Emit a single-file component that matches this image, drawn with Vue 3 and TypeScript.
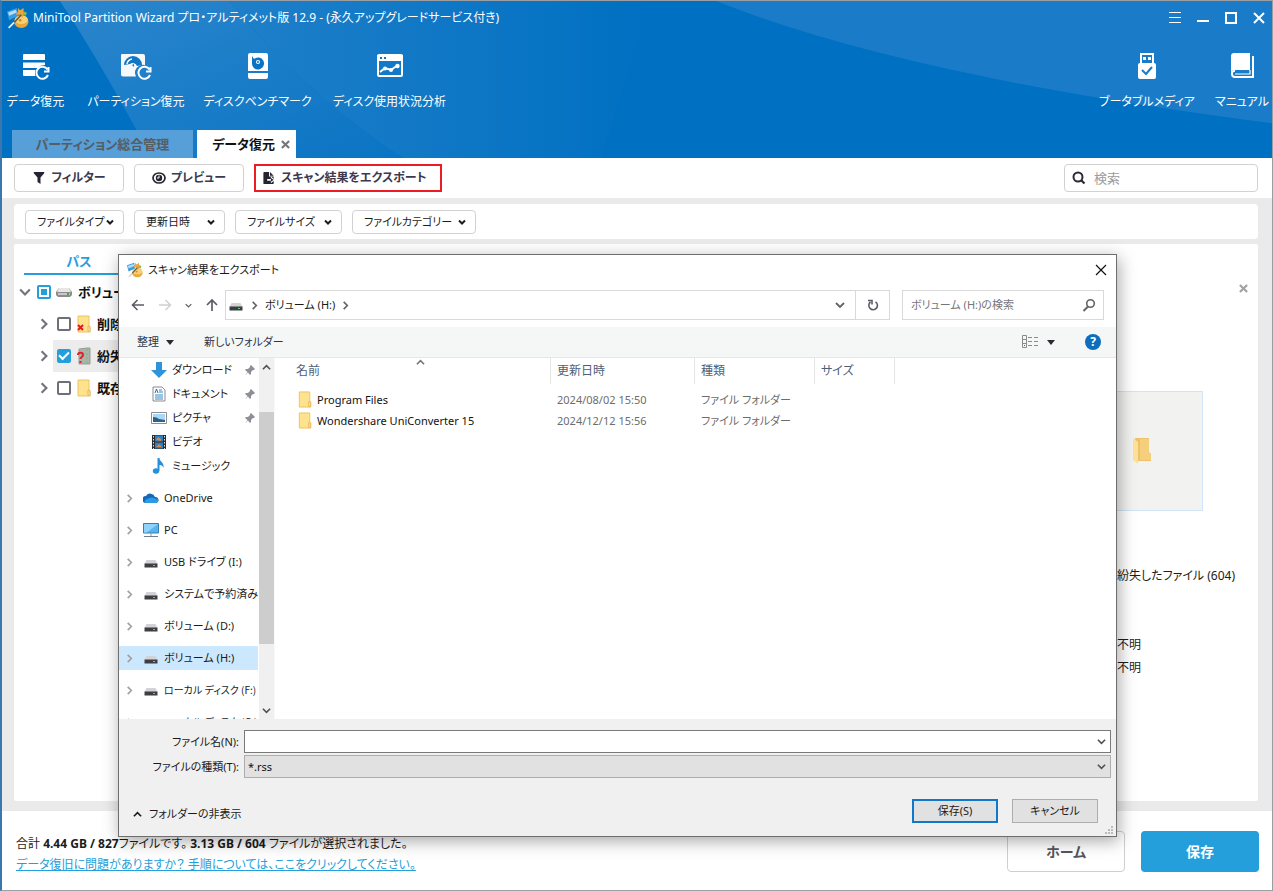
<script setup lang="ts">
import { ref } from 'vue'

interface Tool { label: string; icon: string }
interface Drive { label: string; icon: string; selected?: boolean; long?: boolean }
interface QuickItem { label: string; icon: string; pinned: boolean }
interface FileRow { name: string; modified: string; kind: string }
interface TreeRow { label: string; icon: string; checked: boolean; active: boolean }

const tools: Tool[] = [
  { label: 'データ復元', icon: 'i-data' },
  { label: 'パーティション復元', icon: 'i-part' },
  { label: 'ディスクベンチマーク', icon: 'i-bench' },
  { label: 'ディスク使用状況分析', icon: 'i-usage' },
]
const rightTools: Tool[] = [
  { label: 'ブータブルメディア', icon: 'i-usb' },
  { label: 'マニュアル', icon: 'i-book' },
]
const filters = ['ファイルタイプ', '更新日時', 'ファイルサイズ', 'ファイルカテゴリー']
const tree = ref<TreeRow[]>([
  { label: '削除', icon: 'i-folder-x', checked: false, active: false },
  { label: '紛失', icon: 'i-folder-q', checked: true, active: true },
  { label: '既存', icon: 'i-folder', checked: false, active: false },
])
const quick: QuickItem[] = [
  { label: 'ダウンロード', icon: 'i-down', pinned: true },
  { label: 'ドキュメント', icon: 'i-doc', pinned: true },
  { label: 'ピクチャ', icon: 'i-pic', pinned: true },
  { label: 'ビデオ', icon: 'i-video', pinned: false },
  { label: 'ミュージック', icon: 'i-music', pinned: false },
]
const drives: Drive[] = [
  { label: 'OneDrive', icon: 'i-cloud' },
  { label: 'PC', icon: 'i-pc' },
  { label: 'USB ドライブ (I:)', icon: 'i-drive' },
  { label: 'システムで予約済み', icon: 'i-drive' },
  { label: 'ボリューム (D:)', icon: 'i-drive' },
  { label: 'ボリューム (H:)', icon: 'i-drive', selected: true },
  { label: 'ローカル ディスク (F:)', icon: 'i-drive', long: true },
  { label: 'ローカル ディスク (G:)', icon: 'i-drive', long: true },
]
const files: FileRow[] = [
  { name: 'Program Files', modified: '2024/08/02 15:50', kind: 'ファイル フォルダー' },
  { name: 'Wondershare UniConverter 15', modified: '2024/12/12 15:56', kind: 'ファイル フォルダー' },
]
const query = ref('')
const folderQuery = ref('')
const fileName = ref('')
const fileType = ref('*.rss')
</script>

<template>
  <div class="window">
    <svg class="sprite" aria-hidden="true">
      <symbol id="i-logo" viewBox="0 0 20 20">
        <ellipse cx="13" cy="13.500" rx="6.500" ry="5.500" fill="#e9a838" />
        <ellipse cx="13" cy="11.500" rx="6" ry="4" fill="#f8cf74" />
        <path d="M0 4 9 1l1 7-8 4z" fill="#3c9ae0" />
        <path d="M1 5 8 2.500 9 5 2 8z" fill="#b5ddf7" />
        <path d="m10 1 2 2 3-2 0 3 3 2-3 1-1 3-2-3-4 0 2-3z" fill="#f3a33c" />
        <path d="m15 4 3 1-1 3-3-1z" fill="#8fba45" />
        <path d="M3 18 13 7" stroke="#6b5a3c" stroke-width="1.500" />
        <path d="m1.500 19 5-5" stroke="#e6edf2" stroke-width="1.600" />
        <circle cx="12" cy="12" r="1.200" fill="#c98a2c" />
      </symbol>
      <symbol id="i-data" viewBox="0 0 28 28">
        <path d="M2 2h20a1 1 0 0 1 1 1v5H1V3a1 1 0 0 1 1-1zM1 10.500h22V13a8 8 0 0 0-7 3H1zM1 18h12.500a8 8 0 0 0 0 6H2a1 1 0 0 1-1-1z" fill="#fff" />
        <path d="M25.500 17.500A6 6 0 1 0 26 23M26.500 15v4.500H22" fill="none" stroke="#fff" stroke-width="2" />
      </symbol>
      <symbol id="i-part" viewBox="0 0 32 28">
        <path d="M2 2h21a2 2 0 0 1 2 2v9a8 8 0 0 0-9 11.500H3a2 2 0 0 1-2-2V3a1 1 0 0 1 1-1z" fill="#f6f8fa" />
        <path d="M4 13a9 9 0 0 1 18 0l-5 1a4.500 4.500 0 0 0-7-2zM12 13l2-1v3z" fill="#1176c5" />
        <path d="M7 12a6 6 0 0 1 5-5" fill="none" stroke="#f6f8fa" stroke-width="1.500" />
        <path d="M29.500 17.500A6 6 0 1 0 30 23M30.500 15v4.500H26" fill="none" stroke="#fff" stroke-width="2" />
      </symbol>
      <symbol id="i-bench" viewBox="0 0 22 28">
        <path d="M3 1h16a2 2 0 0 1 2 2v16H1V3a2 2 0 0 1 2-2zM1 21h20v4a2 2 0 0 1-2 2H3a2 2 0 0 1-2-2z" fill="#fff" />
        <path d="M5 4v7a6 6 0 1 0 2-4z" fill="#0b73c4" />
        <circle cx="11" cy="10" r="2" fill="#fff" /><circle cx="11" cy="10" r="1" fill="#0b73c4" />
      </symbol>
      <symbol id="i-usage" viewBox="0 0 28 28">
        <rect x="2" y="3" width="24" height="21" rx="1" fill="none" stroke="#fff" stroke-width="2" />
        <path d="M1 3h26v6H1z" fill="#fff" />
        <path d="M4 5h2v2H4zM8 5h2v2H8z" fill="#0b73c4" />
        <path d="m4 20 5-4 6 2 7-5" fill="none" stroke="#fff" stroke-width="2" />
        <circle cx="9" cy="16.500" r="2" fill="#fff" /><circle cx="15" cy="18" r="2" fill="#fff" /><circle cx="21.500" cy="14" r="2.200" fill="#fff" />
      </symbol>
      <symbol id="i-usb" viewBox="0 0 20 28">
        <path d="M3 1h14v10H3z" fill="#fff" /><path d="M5 3h10v8H5z" fill="#1a7cc8" /><path d="M6 5h3v3H6zM11 5h3v3h-3z" fill="#fff" />
        <rect x="1" y="11" width="18" height="16" rx="2" fill="#fff" />
        <path d="m5 18 4 4 6-7" fill="none" stroke="#1a7cc8" stroke-width="2" />
      </symbol>
      <symbol id="i-book" viewBox="0 0 26 28">
        <path d="M5 1h16v17H6a4 4 0 0 0-4 3V4a3 3 0 0 1 3-3z" fill="#fff" />
        <path d="M24 4v21H6a3 3 0 0 1-3-3 2.500 2.500 0 0 1 3-3" fill="none" stroke="#fff" stroke-width="2" />
        <path d="M21 18v4H6" fill="none" stroke="#fff" stroke-width="1.200" />
      </symbol>
      <symbol id="i-chev" viewBox="0 0 10 10"><path d="m3 1 4 4-4 4" fill="none" stroke="currentColor" stroke-width="1.800" /></symbol>
      <symbol id="i-chevd" viewBox="0 0 10 10"><path d="m1 3 4 4 4-4" fill="none" stroke="currentColor" stroke-width="1.800" /></symbol>
      <symbol id="i-caret" viewBox="0 0 8 8"><path d="m1 2.500 3 3 3-3" fill="none" stroke="currentColor" stroke-width="2" /></symbol>
      <symbol id="i-chevu" viewBox="0 0 10 10"><path d="m1 7 4-4 4 4" fill="none" stroke="currentColor" stroke-width="1.800" /></symbol>
      <symbol id="i-x" viewBox="0 0 10 10"><path d="m1 1 8 8M9 1 1 9" fill="none" stroke="currentColor" stroke-width="2.400" /></symbol>
      <symbol id="i-filter" viewBox="0 0 12 14"><path d="M1 1h10a1 1 0 0 1 0 1.500L7.500 6.500V13l-3-2V6.500L1 2.500a1 1 0 0 1 0-1.500z" fill="#242433" /></symbol>
      <symbol id="i-eye" viewBox="0 0 14 14">
        <ellipse cx="7" cy="7" rx="6" ry="5" fill="none" stroke="#242433" stroke-width="1.700" />
        <circle cx="7" cy="7" r="3.200" fill="#242433" /><path d="M7 4.500v2.500H5" fill="none" stroke="#fff" stroke-width="1" />
      </symbol>
      <symbol id="i-export" viewBox="0 0 14 15">
        <path d="M2 1h5v5h5v7a1 1 0 0 1-1 1H2a1 1 0 0 1-1-1V2a1 1 0 0 1 1-1z" fill="#242433" /><path d="M8 1v4h4z" fill="#242433" />
        <path d="M5 8.500h4V6l4.500 3.500L9 13v-2.500H5z" fill="#fff" /><path d="M9 7.500l3 2-3 2z" fill="#242433" />
      </symbol>
      <symbol id="i-search" viewBox="0 0 14 14"><circle cx="6" cy="6" r="4.500" fill="none" stroke="currentColor" stroke-width="2" /><path d="m9 9 3.500 3.500" stroke="currentColor" stroke-width="2.200" /></symbol>
      <symbol id="i-find" viewBox="0 0 14 14"><circle cx="8.500" cy="5.500" r="3.800" fill="none" stroke="currentColor" stroke-width="1.600" /><path d="M6 8.500 1.500 13" stroke="currentColor" stroke-width="2" /></symbol>
      <symbol id="i-folder" viewBox="0 0 16 18"><path d="M2 1h11v10l1 1v5H2z" fill="#ffe28d" stroke="#eec260" /><path d="M12 11v5.500h2v-5z" fill="#ffe9ae" stroke="#e8b857" /></symbol>
      <symbol id="i-folder-x" viewBox="0 0 16 18"><path d="M2 1h11v10l1 1v5H2z" fill="#ffe28d" stroke="#eec260" /><path d="M12 11v5.500h2v-5z" fill="#ffe9ae" stroke="#e8b857" /><path d="m2 10 5 5M7 10l-5 5" stroke="#e01c1c" stroke-width="2" /></symbol>
      <symbol id="i-folder-q" viewBox="0 0 16 18"><path d="M3 2 11 1h3v16H3z" fill="#aeb2ad" stroke="#999" /><path d="M11 2v14" stroke="#7ac878" stroke-width="1.500" stroke-dasharray="2 2" /><path d="M2 8c0-3 5-3 5 0 0 2-2.500 2-2.500 4M4.500 14v2" fill="none" stroke="#d9262c" stroke-width="2" /></symbol>
      <symbol id="i-disk" viewBox="0 0 16 12"><path d="M3 2h10l3 4v3l-2 2H2L0 9V6z" fill="#8c8c8c" /><path d="M3 2h10l2 4H1z" fill="#e6e6e6" /><path d="M2 7h12v2H2z" fill="#c8c8c8" /><path d="M11 7h2v2h-2z" fill="#28b53a" /></symbol>
      <symbol id="i-drive" viewBox="0 0 16 16"><path d="m3.500 6-2 4h13l-2-4z" fill="#d3d3d5" /><path d="M1.500 9.500h13V13.500h-13z" fill="#3d3d43" /><path d="M10 11h2v1h-2z" fill="#4ddd63" /></symbol>
      <symbol id="i-down" viewBox="0 0 16 16"><path d="M5 0h6v8h5l-8 8-8-8h5z" fill="#2e93da" /></symbol>
      <symbol id="i-doc" viewBox="0 0 16 16"><path d="M2 1h9l3 3v11H2z" fill="#fff" stroke="#8b8b8b" /><path d="M8 4h3M8 6h4M4 9h8M4 11h8M4 13h8" stroke="#3688c4" /><path d="m4 7 1.500-4L7 7" fill="none" stroke="#1d70b5" /></symbol>
      <symbol id="i-pic" viewBox="0 0 16 16"><path d="M.5 2.500h15v11H.5z" fill="#fff" stroke="#8e8e8e" /><path d="M2 4h12v8H2z" fill="#a9d7f5" /><path d="M2 7q4 0 6 2l6 1v2H2z" fill="#2c6289" /></symbol>
      <symbol id="i-video" viewBox="0 0 16 16"><path d="M1 1h14v14H1z" fill="#2c2c30" /><path d="M4 1.500h8v6H4zM4 8.500h8v6H4z" fill="#2d80c4" /><path d="m5 6 2-3 3 2v2zM5 13l3-3 3 3z" fill="#d98944" /><path d="M2.500 2v13M13.500 2v13" stroke="#e2e2e2" stroke-dasharray="1.500 1.500" /></symbol>
      <symbol id="i-music" viewBox="0 0 16 16"><ellipse cx="5" cy="13" rx="3.200" ry="2.700" fill="#2590dc" /><path d="M6.500 0h2c0 4 5 4 4 10-1-3-3-3-4-3v6h-2z" fill="#2590dc" /></symbol>
      <symbol id="i-cloud" viewBox="0 0 16 16"><path d="M3 13a3.500 3.500 0 0 1 0-7 5 5 0 0 1 9 1 3 3 0 0 1 1 6z" fill="#1568b8" /><path d="M2 13q-1-3 2-4 5-3 9 0 3 0 2 3l-2 1z" fill="#2a9be6" /></symbol>
      <symbol id="i-pc" viewBox="0 0 16 16"><path d="M.5 1.500h15v9.500H.5z" fill="#55b5f0" stroke="#397eab" /><path d="M1 2h14L4 10.500H1z" fill="#8fd2fa" /><path d="M8 11v3" stroke="#999" /><path d="M1 14.500h14" stroke="#6e7f8d" /></symbol>
      <symbol id="i-pin" viewBox="0 0 12 12"><path d="m7 1 4 4-1 1-1 0-2 2 0 2-1 1-2-2.500L1 11l2.500-3L1 6l1-1h2l2-2V2z" fill="#8e8e98" /></symbol>
      <symbol id="i-open" viewBox="0 0 20 28"><path d="M3 1h14v14l2 2v7H6z" fill="#eec26a" /><path d="M8 2h9v13l2 2v6H8z" fill="#f6cf7c" /><path d="m1 1 5 4v22l-5-4z" fill="#ffe19a" /></symbol>
    </svg>

    <header class="banner">
      <svg class="art" viewBox="0 0 1273 158" preserveAspectRatio="none" aria-hidden="true">
        <defs>
          <linearGradient id="g1" x1="0" y1="0" x2="1" y2="1"><stop offset="0" stop-color="#2b86cc" /><stop offset="1" stop-color="#0a74c4" /></linearGradient>
          <linearGradient id="g2" x1="0" y1="0" x2="1" y2="0"><stop offset="0" stop-color="#1f7fc9" /><stop offset="1" stop-color="#0070c2" /></linearGradient>
        </defs>
        <path d="M58 0Q98 60 150 158H402Q300 90 228 0z" fill="url(#g1)" />
        <path d="M228 0Q300 90 402 158H600L650 0z" fill="url(#g2)" />
        <path d="M716 0Q900 75 1273 123V0z" fill="#1a7cc8" />
      </svg>
      <div class="titlebar">
        <svg class="logo"><use href="#i-logo" /></svg>
        <h1>MiniTool Partition Wizard プロ・アルティメット版 12.9 - (永久アップグレードサービス付き)</h1>
        <div class="winbtns">
          <button aria-label="メニュー"><svg viewBox="0 0 12 12"><path d="M0 .5h12M0 5.500h12M0 10.500h12" stroke="#fff" /></svg></button>
          <button aria-label="最小化"><svg viewBox="0 0 12 12"><path d="M0 9h12" stroke="#fff" stroke-width="2" /></svg></button>
          <button aria-label="最大化"><svg viewBox="0 0 12 12"><path d="M1 1h10v10H1z" fill="none" stroke="#fff" stroke-width="2" /></svg></button>
          <button aria-label="閉じる"><svg viewBox="0 0 12 12"><path d="m1 1 10 10M11 1 1 11" stroke="#fff" stroke-width="2" /></svg></button>
        </div>
      </div>
      <nav class="tools">
        <div class="left">
          <button v-for="t in tools" :key="t.label"><svg><use :href="'#' + t.icon" /></svg><span>{{ t.label }}</span></button>
        </div>
        <div class="right">
          <button v-for="t in rightTools" :key="t.label"><svg><use :href="'#' + t.icon" /></svg><span>{{ t.label }}</span></button>
        </div>
      </nav>
      <div class="tabs">
        <button class="tab idle">パーティション総合管理</button>
        <button class="tab current">データ復元<svg><use href="#i-x" /></svg></button>
      </div>
    </header>

    <div class="actions">
      <button class="act"><svg><use href="#i-filter" /></svg>フィルター</button>
      <button class="act"><svg><use href="#i-eye" /></svg>プレビュー</button>
      <button class="act export"><svg><use href="#i-export" /></svg>スキャン結果をエクスポート</button>
      <label class="search"><svg><use href="#i-search" /></svg><input v-model="query" type="text" placeholder="検索" aria-label="検索" /></label>
    </div>

    <main class="work">
      <div class="filters">
        <button v-for="f in filters" :key="f">{{ f }}<svg><use href="#i-caret" /></svg></button>
      </div>
      <div class="panel">
        <section class="tree">
          <div class="pathtab">パス</div>
          <div class="trow root">
            <svg class="arrow"><use href="#i-chevd" /></svg>
            <input type="checkbox" class="partial" aria-label="ボリュー" />
            <svg class="disk"><use href="#i-disk" /></svg><span>ボリュー</span>
          </div>
          <div v-for="r in tree" :key="r.label" class="trow">
            <svg class="arrow"><use href="#i-chev" /></svg>
            <label :class="{ active: r.active }">
              <input v-model="r.checked" type="checkbox" />
              <svg class="fold"><use :href="'#' + r.icon" /></svg><span>{{ r.label }}</span>
            </label>
          </div>
        </section>
        <aside class="preview">
          <button class="pclose" aria-label="閉じる"><svg><use href="#i-x" /></svg></button>
          <div class="thumb"><svg><use href="#i-open" /></svg></div>
          <p class="pname">紛失したファイル (604)</p>
          <p>不明</p>
          <p>不明</p>
        </aside>
      </div>
    </main>

    <footer class="status">
      <div class="info">
        <p>合計 <b>4.44 GB / 827</b>ファイルです。 <b>3.13 GB / 604</b> ファイルが選択されました。</p>
        <a href="#">データ復旧に問題がありますか？ 手順については、ここをクリックしてください。</a>
      </div>
      <button class="home">ホーム</button>
      <button class="save">保存</button>
    </footer>

    <section class="dialog" role="dialog" aria-labelledby="dlg-title">
      <div class="dtitle">
        <svg class="dlogo"><use href="#i-logo" /></svg>
        <h2 id="dlg-title">スキャン結果をエクスポート</h2>
        <button aria-label="閉じる"><svg viewBox="0 0 12 12"><path d="m1 1 10 10M11 1 1 11" stroke="#111" stroke-width="1.200" /></svg></button>
      </div>
      <div class="addr">
        <div class="hist">
          <button aria-label="戻る"><svg viewBox="0 0 14 12"><path d="M13 6H2M6.500 1 1.500 6l5 5" fill="none" stroke="#5c5c66" stroke-width="1.600" /></svg></button>
          <button aria-label="進む"><svg viewBox="0 0 14 12"><path d="M1 6h11M7.500 1l5 5-5 5" fill="none" stroke="#cfcfd3" stroke-width="1.400" /></svg></button>
          <button class="tiny" aria-label="履歴"><svg><use href="#i-chevd" /></svg></button>
          <button aria-label="上へ"><svg viewBox="0 0 14 14"><path d="M7 13V2M2 7l5-5 5 5" fill="none" stroke="#5c5c66" stroke-width="1.700" /></svg></button>
        </div>
        <div class="crumbs">
          <svg class="drv"><use href="#i-drive" /></svg><svg class="ch"><use href="#i-chev" /></svg>
          <span>ボリューム (H:)</span><svg class="ch"><use href="#i-chev" /></svg>
          <button class="drop" aria-label="以前の場所"><svg><use href="#i-chevd" /></svg></button>
        </div>
        <button class="reload" aria-label="更新"><svg viewBox="0 0 12 12"><path d="M8.500 2.800A4.300 4.300 0 1 1 3.500 3M1 1.500h4v4" fill="none" stroke="#5c5c66" stroke-width="1.600" /></svg></button>
        <label class="dsearch"><input v-model="folderQuery" type="text" placeholder="ボリューム (H:)の検索" aria-label="ボリューム (H:)の検索" /><svg><use href="#i-find" /></svg></label>
      </div>
      <div class="cmds">
        <button>整理<i class="tri"></i></button>
        <button>新しいフォルダー</button>
        <button class="view" aria-label="表示方法"><svg viewBox="0 0 16 14"><path d="M.5.5h4v12h-4zM.5 4.500h4M.5 8.500h4" fill="none" stroke="#8b8b8b" /><path d="M2 10h1v1H2z" fill="#d22" /><path d="M6 2.500h4M12 2.500h4M6 6.500h4M12 6.500h4M6 10.500h4M12 10.500h4" stroke="#8b8b8b" /></svg><i class="tri"></i></button>
        <button class="help" aria-label="ヘルプ">?</button>
      </div>
      <div class="dbody">
        <nav class="side">
          <ul class="quick">
            <li v-for="q in quick" :key="q.label"><svg class="ic"><use :href="'#' + q.icon" /></svg><span>{{ q.label }}</span><svg v-if="q.pinned" class="pin"><use href="#i-pin" /></svg></li>
          </ul>
          <ul class="drives">
            <li v-for="d in drives" :key="d.label" :class="{ selected: d.selected, long: d.long }"><svg class="ch"><use href="#i-chev" /></svg><svg class="ic"><use :href="'#' + d.icon" /></svg><span>{{ d.label }}</span></li>
          </ul>
        </nav>
        <div class="bar"><svg><use href="#i-chevu" /></svg><i></i><b></b><svg><use href="#i-chevd" /></svg></div>
        <div class="list">
          <table>
            <colgroup><col class="c1" /><col class="c2" /><col class="c3" /><col class="c4" /><col /></colgroup>
            <thead><tr><th>名前<svg class="sort"><use href="#i-chevu" /></svg></th><th>更新日時</th><th>種類</th><th>サイズ</th><th class="rest"></th></tr></thead>
            <tbody>
              <tr v-for="f in files" :key="f.name">
                <td><div class="fname"><svg><use href="#i-folder" /></svg>{{ f.name }}</div></td><td>{{ f.modified }}</td><td>{{ f.kind }}</td><td></td><td></td>
              </tr>
            </tbody>
          </table>
        </div>
      </div>
      <div class="dfoot">
        <div class="fields">
          <label for="fn">ファイル名(N):</label>
          <div class="box white"><input id="fn" v-model="fileName" type="text" /><svg><use href="#i-chevd" /></svg></div>
          <label for="ft">ファイルの種類(T):</label>
          <div class="box"><select id="ft" v-model="fileType"><option>*.rss</option></select><svg><use href="#i-chevd" /></svg></div>
        </div>
        <div class="dbtns">
          <button class="hide"><svg><use href="#i-chevu" /></svg>フォルダーの非表示</button>
          <button class="push primary">保存(S)</button>
          <button class="push">キャンセル</button>
        </div>
        <svg class="grip" viewBox="0 0 8 8"><path d="M6 0h2v2H6zM3 3h2v2H3zM6 3h2v2H6zM0 6h2v2H0zM3 6h2v2H3zM6 6h2v2H6z" fill="#bbb" /></svg>
      </div>
    </section>
  </div>
</template>

<style>
body { margin: 0; }
</style>

<style scoped>
* { box-sizing: border-box; }
.window { position: relative; display: flex; flex-direction: column; min-height: 100vh; border: 1px solid #9b9fa3; border-left: 2px solid #3b76ad; background: #fff; color: #1c1c1c; font: 12px/18px "Noto Sans", "Noto Sans CJK JP", sans-serif; font-feature-settings: "palt"; white-space: nowrap; overflow: hidden; }
.sprite { position: absolute; width: 0; height: 0; }
button, input, select { font: inherit; font-feature-settings: inherit; color: inherit; background: none; border: 0; padding: 0; margin: 0; outline: 0; white-space: nowrap; border-radius: 0; }
h1, h2, p, ul { margin: 0; padding: 0; font-size: 12px; font-weight: 400; list-style: none; }
svg { flex: none; display: block; }

.banner { position: relative; height: 157px; background: #0070c2; color: #fff; display: flex; flex-direction: column; }
.art { position: absolute; inset: 0; width: 100%; height: 100%; }
.titlebar, .tools, .tabs { position: relative; display: flex; }
.titlebar { height: 34px; align-items: center; padding: 0 7px 0 5px; gap: 4px; }
.logo { width: 22px; height: 22px; }
.winbtns { margin-left: auto; display: flex; gap: 16px; }
.winbtns svg { width: 12px; height: 12px; }
.tools { height: 95px; justify-content: space-between; padding: 17px 5px 0; }
.tools .left { display: grid; grid-template-columns: 57px 94px 99px 115px; column-gap: 25px; }
.tools .right { display: grid; grid-template-columns: 90px 50px; column-gap: 25px; }
.tools button { display: flex; flex-direction: column; align-items: center; gap: 13px; }
.tools svg { width: 32px; height: 28px; }
.tabs { padding-left: 10px; gap: 4px; height: 28px; }
.tab { font-weight: 700; font-size: 13px; height: 28px; }
.idle { width: 181px; background: #569fd8; color: #575d63; }
.current { width: 99px; background: #fff; color: #111; display: flex; align-items: center; justify-content: flex-end; gap: 6px; padding-right: 6px; }
.current svg { width: 9px; height: 9px; color: #777; }

.actions { display: flex; align-items: center; gap: 10px; height: 40px; padding: 0 14px 0 12px; }
.act { height: 28px; width: 110px; border: 1px solid #d2d2d2; border-radius: 4px; display: flex; align-items: center; justify-content: center; gap: 5px; font-weight: 700; color: #3d3a4f; }
.act svg { width: 14px; height: 14px; }
.act.export { width: 188px; border: 2px solid #ed1c24; border-radius: 0; justify-content: flex-start; padding-left: 6px; }
.search { margin-left: auto; width: 194px; height: 28px; border: 1px solid #d2d2d2; border-radius: 4px; display: flex; align-items: center; gap: 8px; padding: 0 7px; color: #2b2b3a; }
.search svg { width: 14px; height: 14px; }
.search input { flex: 1; min-width: 0; font-size: 13px; }
input::placeholder { color: #9b9b9b; opacity: 1; }

.work { flex: 1; background: #eaeaea; padding: 6px 14px 10px 12px; display: flex; flex-direction: column; gap: 5px; }
.filters { height: 35px; background: #fff; border-radius: 4px; display: grid; grid-template-columns: 99px 91px 107px 124px; align-items: center; gap: 10px; padding: 0 11px; }
.filters button { height: 24px; border: 1px solid #d2d2d2; border-radius: 4px; padding: 0 9px 0 11px; display: flex; align-items: center; justify-content: space-between; font-size: 11px; }
.filters svg { width: 8px; height: 8px; }
.panel { flex: 1; background: #fff; display: flex; justify-content: space-between; border-radius: 2px; }
.tree { width: 200px; padding-left: 10px; overflow: hidden; }
.pathtab { width: 110px; height: 31px; padding-top: 8px; border-bottom: 2px solid #249fdb; color: #249fdb; font-weight: 700; font-size: 13px; text-align: center; }
.trow { display: flex; align-items: center; height: 32px; padding-left: 14px; gap: 3px; font-weight: 700; font-size: 13px; color: #111; }
.trow.root { height: 33px; padding-left: 0; gap: 0; }
.arrow { width: 12px; height: 12px; color: #74747c; }
.root .arrow { margin-right: 1px; margin-left: -5px; }
.trow label { display: flex; align-items: center; height: 32px; flex: 1; gap: 5px; padding-left: 4px; }
.trow .active { background: #ececec; }
.trow input { appearance: none; width: 14px; height: 14px; border: 2px solid #6f6f77; border-radius: 2px; flex: none; display: grid; place-content: center; }
.trow input:checked { background: #249fdb; border-color: #249fdb; }
.trow input:checked::before { content: ""; width: 8px; height: 4px; border: solid #fff; border-width: 0 0 2px 2px; transform: rotate(-45deg) translate(1px, -1px); }
.trow .partial { border-color: #249fdb; margin: 0 5px; }
.trow .partial::before { content: ""; width: 6px; height: 6px; background: #249fdb; }
.disk { width: 16px; height: 12px; margin-right: 6px; }
.fold { width: 16px; height: 18px; }
.preview { width: 182px; padding: 40px 10px 0 4px; }
.pclose { display: block; margin-left: auto; }
.pclose svg { width: 9px; height: 9px; color: #a2a2a2; }
.thumb { width: 123px; height: 120px; margin: 98px 0 55px; border: 1px solid #cfe4f7; background: #f2f2f0; display: grid; place-items: center; }
.thumb svg { width: 20px; height: 28px; }
.preview p { padding-left: 37px; line-height: 23px; }
.preview .pname { margin-bottom: 47px; line-height: 20px; }

.status { height: 79px; display: flex; padding: 20px 13px 0 14px; gap: 16px; }
.info { flex: 1; padding-top: 2px; line-height: 21px; }
.info a { color: #249fdb; text-decoration: underline; }
.status button { width: 118px; height: 41px; border-radius: 4px; font-size: 14px; font-weight: 700; }
.home { border: 1px solid #cfcfcf; color: #55555c; }
.status .save { background: #249fdb; color: #fff; }

.dialog { position: absolute; left: 116px; right: 155px; top: 253px; border: 1px solid #6e6e6e; background: #fff; box-shadow: 2px 4px 16px rgba(0, 0, 0, .35); color: #1a1a1a; font-size: 11px; }
.dialog h2 { font-size: 11px; }
.dtitle { height: 29px; display: flex; align-items: center; gap: 5px; padding: 0 9px 0 8px; }
.dlogo { width: 16px; height: 16px; }
.dtitle button { margin-left: auto; }
.dtitle button svg { width: 12px; height: 12px; }
.addr { display: flex; padding: 6px 12px 7px; height: 43px; }
.hist { width: 94px; display: flex; align-items: center; justify-content: space-between; padding-right: 6px; color: #5c5c66; }
.hist svg { width: 14px; height: 14px; }
.hist .tiny svg { width: 7px; height: 7px; }
.crumbs { flex: 1; border: 1px solid #d9d9d9; display: flex; align-items: center; padding: 0 10px 0 2px; gap: 6px; }
.drv { width: 16px; height: 16px; }
.crumbs .ch { width: 9px; height: 9px; color: #62626a; }
.drop { margin-left: auto; }
.drop svg { width: 10px; height: 10px; color: #62626a; }
.reload { width: 34px; border: 1px solid #d9d9d9; border-left: 0; display: grid; place-items: center; margin-right: 12px; }
.reload svg { width: 12px; height: 12px; }
.dsearch { width: 202px; border: 1px solid #d9d9d9; display: flex; align-items: center; padding: 0 7px 0 8px; color: #62626a; }
.dsearch input { flex: 1; min-width: 0; }
.dsearch input::placeholder { color: #75757c; }
.dsearch svg { width: 14px; height: 14px; }
.cmds { height: 31px; background: #f5f7f7; border-bottom: 1px solid #e6e8e8; display: flex; align-items: center; padding: 0 15px 0 18px; gap: 30px; color: #2e3548; }
.cmds button { display: flex; align-items: center; gap: 7px; }
.tri { border: 4px solid transparent; border-top: 5px solid #2b2b33; border-bottom: 0; }
.cmds .view { margin-left: auto; gap: 9px; }
.view svg { width: 16px; height: 14px; }
.cmds .help { width: 16px; height: 16px; border-radius: 8px; background: #0d6ebd; color: #fff; font-size: 12px; font-weight: 700; justify-content: center; }
.dbody { height: 361px; display: flex; overflow: hidden; }
.side { width: 139px; overflow: hidden; }
.side li { height: 24px; display: flex; align-items: center; font-size: 11px; }
.ic { width: 16px; height: 16px; }
.quick { margin-bottom: 8px; }
.quick li { padding: 0 2px 0 32px; gap: 5px; }
.pin { width: 12px; height: 12px; margin-left: auto; }
.drives li { margin-bottom: 8px; padding-left: 6px; gap: 5px; }
.drives .long { font-family: "Noto Sans CJK JP", sans-serif; font-size: 10px; }
.drives .ch { width: 9px; height: 9px; color: #a0a0a0; margin-right: 4px; }
.selected { background: #cce8ff; }
.bar { width: 16px; margin: 0 2px 0 1px; background: #f0f0f0; display: flex; flex-direction: column; align-items: center; padding: 5px 0 4px; border-right: 1px solid #fafafa; color: #505058; }
.bar svg { width: 9px; height: 9px; }
.bar i { width: 15px; height: 232px; margin-top: 40px; background: #cdcdcd; }
.bar b { flex: 1; }
.list { flex: 1; min-width: 0; }
table { width: 100%; border-collapse: separate; border-spacing: 0; table-layout: fixed; }
.c1 { width: 274px; } .c2 { width: 144px; } .c3 { width: 120px; } .c4 { width: 80px; }
th { position: relative; height: 26px; padding: 0 6px; text-align: left; font-size: 12px; font-weight: 400; color: #4c607a; border-right: 1px solid #e5e5e5; }
th:first-child { padding-left: 19px; }
th.rest { border: 0; }
.sort { position: absolute; left: 139px; top: 0; width: 9px; height: 9px; color: #74747c; }
tbody::before { content: ""; display: block; height: 5px; }
td { height: 21px; padding: 0 6px; color: #6d6d6d; }
.fname { display: flex; align-items: center; gap: 4px; padding-left: 14px; color: #111; }
.fname svg { width: 16px; height: 17px; }
.dfoot { position: relative; background: #f0f0f0; height: 117px; padding: 11px 5px 0 14px; }
.fields { display: grid; grid-template-columns: 106px 1fr; column-gap: 5px; row-gap: 2px; align-items: center; }
.fields label { text-align: right; }
.box { height: 23px; display: flex; align-items: center; border: 1px solid #adadad; background: #e1e1e1; padding-right: 4px; color: #505058; }
.box.white { background: #fff; border-color: #7a7a7a; }
.box input, .box select { flex: 1; min-width: 0; appearance: none; padding: 0 3px; color: #111; height: 21px; }
.box svg { width: 9px; height: 9px; }
.dbtns { display: flex; align-items: center; gap: 14px; padding-right: 13px; margin-top: 21px; height: 24px; }
.hide { display: flex; align-items: center; gap: 7px; margin-right: auto; padding-top: 6px; }
.hide svg { width: 9px; height: 9px; }
.push { width: 86px; height: 24px; background: #e1e1e1; border: 1px solid #adadad; }
.push.primary { border: 2px solid #1177c9; }
.grip { position: absolute; right: 3px; bottom: 2px; width: 8px; height: 8px; }
</style>
